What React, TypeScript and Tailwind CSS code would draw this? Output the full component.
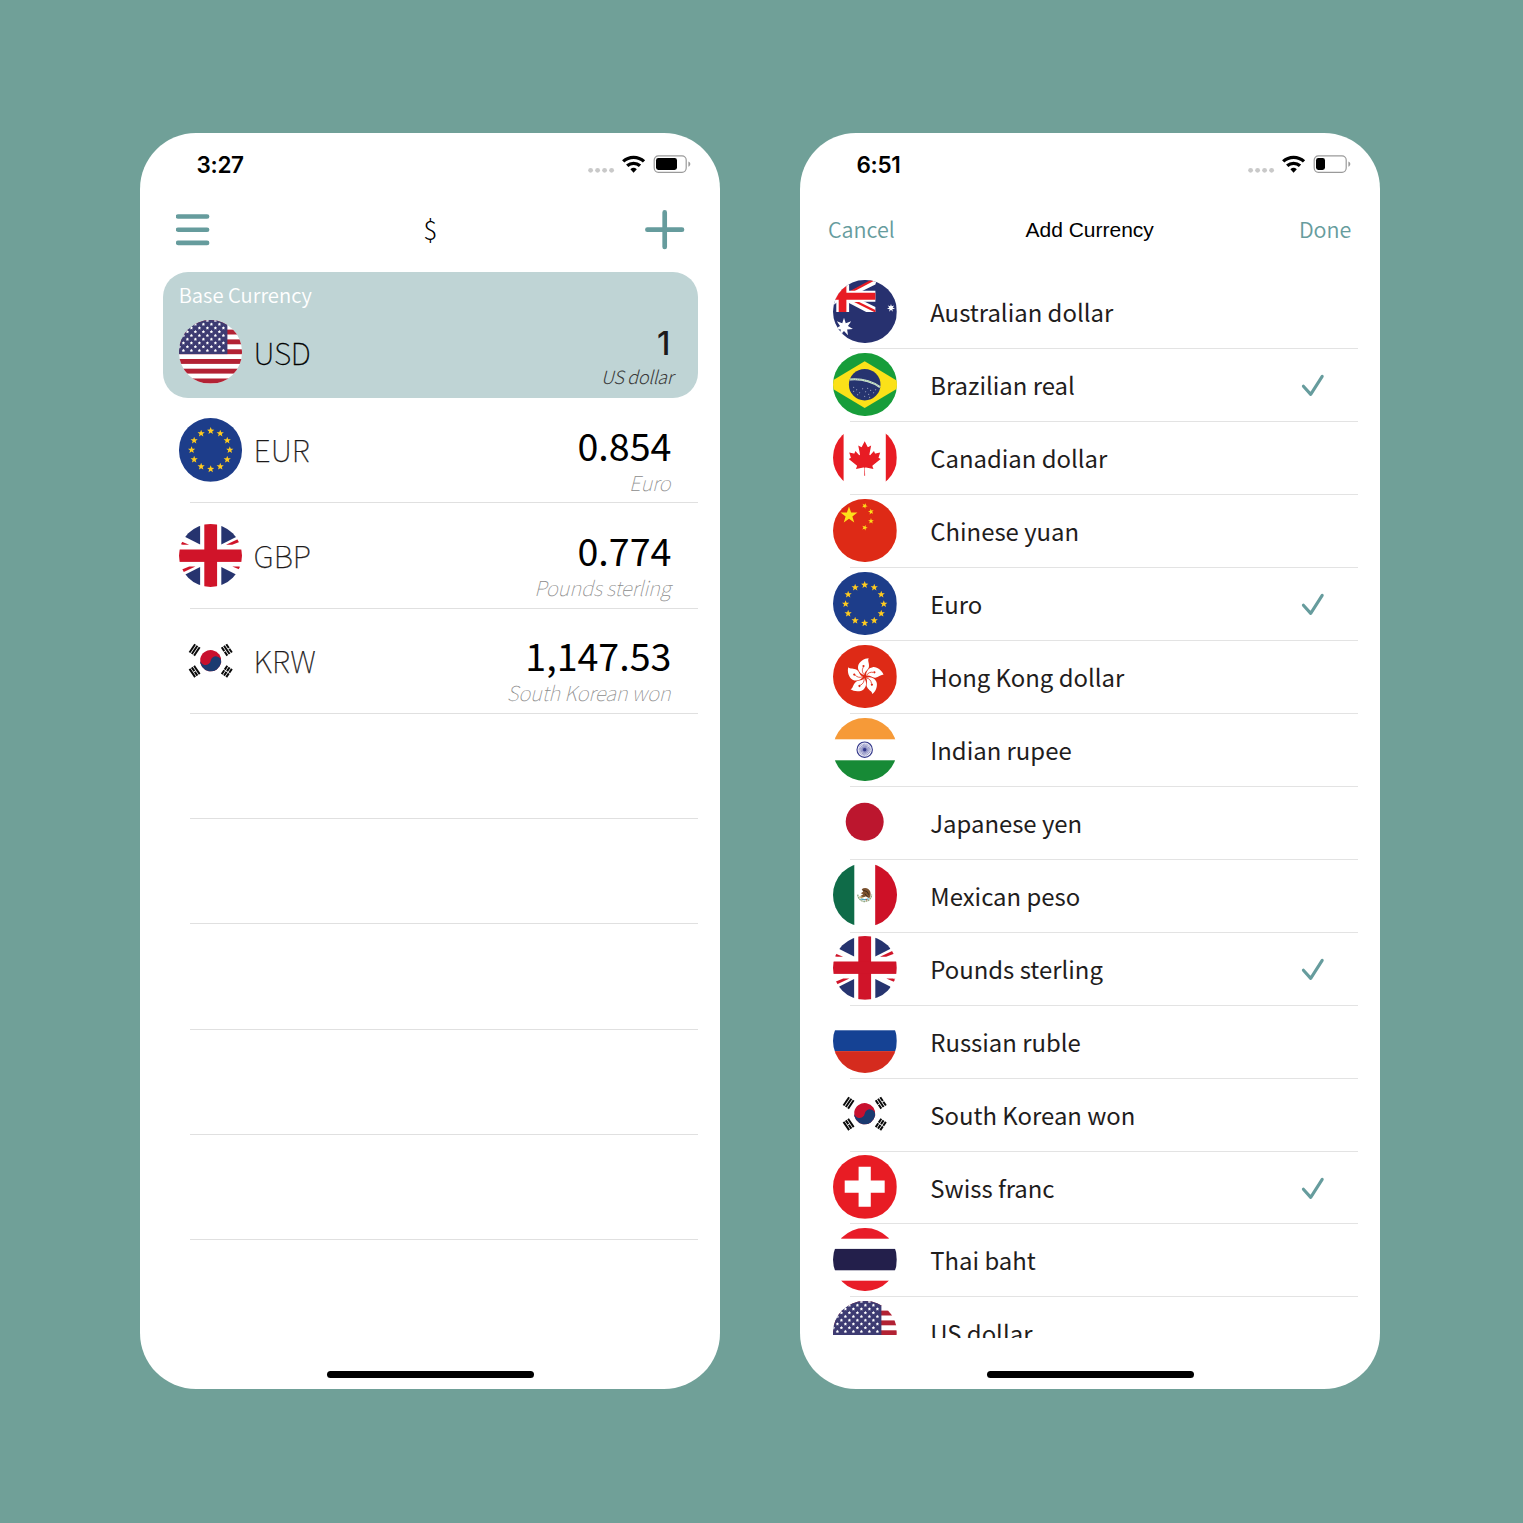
import type { ReactNode } from "react";

type FlagCode = "us" | "eu" | "gb" | "kr" | "au" | "br" | "ca" | "cn" | "hk" | "in" | "jp" | "mx" | "ru" | "ch" | "th";

function starPoints(cx: number, cy: number, r: number, n = 5, inner = 0.4, rot = 0) {
  const pts: string[] = [];
  for (let i = 0; i < n * 2; i++) {
    const rad = i % 2 === 0 ? r : r * inner;
    const a = (Math.PI * i) / n - Math.PI / 2 + (rot * Math.PI) / 180;
    pts.push(`${(cx + rad * Math.cos(a)).toFixed(2)},${(cy + rad * Math.sin(a)).toFixed(2)}`);
  }
  return pts.join(" ");
}

/* Three bars of a trigram; a broken bar has a gap in its middle. */
function Trigram({ x, y, angle, broken }: { x: number; y: number; angle: number; broken: boolean[] }) {
  return (
    <g transform={`translate(${x} ${y}) rotate(${angle})`} stroke="#0a0a0a" strokeWidth="2">
      {broken.map((b, i) => (
        <path key={i} d={b ? "M-5 0H-.4M.4 0H5" : "M-5 0H5"} transform={`translate(0 ${(i - 1) * 2.75})`} />
      ))}
    </g>
  );
}

const usStars: [number, number][] = [];
for (let r = 0; r < 9; r++) {
  for (let c = -1; c < 6; c++) {
    usStars.push([-27.3 + c * 8 + (r % 2 ? 4 : 0), -1.2 - r * 3.75]);
  }
}

const flags: Record<FlagCode, ReactNode> = {
  us: (
    <>
      <rect x="-32" y="-32" width="64" height="64" fill="#fff" />
      {[-31.8, -22.1, -12.3, -2.4, 7.3, 17, 26.8].map((y) => (
        <rect key={y} x="-32" y={y} width="64" height="4.9" fill="#b22234" />
      ))}
      <rect x="-32" y="-32" width="48.7" height="34.4" fill="#3d3b72" />
      {usStars
        .filter(([x]) => x < 15.5)
        .map(([x, y], i) => (
          <polygon key={i} points={starPoints(x, y, 1.75, 5, 0.55)} fill="#fff" />
        ))}
    </>
  ),
  eu: (
    <>
      <rect x="-32" y="-32" width="64" height="64" fill="#1d3d8a" />
      {Array.from({ length: 12 }, (_, i) => {
        const a = (i * Math.PI) / 6;
        return <polygon key={i} points={starPoints(19.1 * Math.sin(a), -19.1 * Math.cos(a) + 0.3, 3.8, 5, 0.42)} fill="#ffcb1f" />;
      })}
    </>
  ),
  gb: (
    <>
      <rect x="-32" y="-32" width="64" height="64" fill="#fff" />
      <g fill="#26346f">
        <path d="M-10.6-32V-11.2L-25.4-18.8L-32-32Z" />
        <path d="M10.6-32V-11.2L25.4-18.8L32-32Z" />
        <path d="M-10.6 32V11.2L-25.4 18.8L-32 32Z" />
        <path d="M10.6 32V11.2L25.4 18.8L32 32Z" />
      </g>
      <g fill="#d01429">
        <path d="M-32-15.2L-21.6-10.9H-32Z" />
        <path d="M15.3-10.9L28-16.9L30-14.3L21.5-10.9Z" />
        <path d="M32 15.2L21.6 10.9H32Z" />
        <path d="M-15.3 10.9L-28 16.9L-30 14.3L-21.5 10.9Z" />
        <rect x="-6.4" y="-32" width="12.8" height="64" />
        <rect x="-32" y="-6.2" width="64" height="12.4" />
      </g>
      <path d="M-32-12.5L-28-10.9H-32ZM32 12.5L28 10.9H32Z" fill="#fff" />
    </>
  ),
  kr: (
    <>
      <rect x="-32" y="-32" width="64" height="64" fill="#fff" />
      <g transform="rotate(10)">
        <circle r="10.6" fill="#c8102e" />
        <path d="M-10.6 0A5.3 5.3 0 0 0 0 0A5.3 5.3 0 0 1 10.6 0A10.6 10.6 0 0 1-10.6 0Z" fill="#1b3a70" />
      </g>
      <Trigram x={-16.1} y={-10.8} angle={-56} broken={[false, false, false]} />
      <Trigram x={16.1} y={-10.8} angle={56} broken={[true, false, true]} />
      <Trigram x={-16.1} y={10.8} angle={56} broken={[false, true, false]} />
      <Trigram x={16.1} y={10.8} angle={-56} broken={[true, true, true]} />
    </>
  ),
  au: (
    <>
      <rect x="-32" y="-32" width="64" height="64" fill="#27316f" />
      <path d="M-15.7-19.5L8.5-32H12L10.7-27.2L-4-20H-15.7Z" fill="#fff" />
      <path d="M-16-11.5H-3L10.7-4.6V.3H1.5L-15.7-8.6Z" fill="#fff" />
      <path d="M-14.6-20.8L5-31.2H10L-10-20.8Z" fill="#e81c24" />
      <path d="M-10.6-9.8H-5.6L10.7-1.7V.3H9.5Z" fill="#e81c24" />
      <rect x="-28.4" y="-32" width="12.8" height="32.3" fill="#fff" />
      <path d="M-32-21H10.7V-10H-27L-32-6Z" fill="#fff" />
      <path d="M-32-14L-18.3-27V-19H10.7V-12H-18.3V.3H-26V-12H-32Z" fill="#e81c24" />
      <polygon points={starPoints(-20.7, 15.3, 9.2, 7, 0.44)} fill="#fff" />
      <polygon points={starPoints(26.3, -3.7, 4.1, 7, 0.44)} fill="#fff" />
      <polygon points={starPoints(-24, 21, 2.5, 7, 0.44)} fill="#fff" />
    </>
  ),
  br: (
    <>
      <rect x="-32" y="-32" width="64" height="64" fill="#179d3a" />
      <path d="M0-23.4L39 0L0 23.4L-39 0Z" fill="#fbe119" />
      <circle r="15.8" fill="#26346f" />
      <path d="M-15-5.2Q2-6.8 15.3 2.4" fill="none" stroke="#dcead8" strokeWidth="2" />
      <path d="M-15-5.2Q2-6.8 15.3 2.4" fill="none" stroke="#5aa572" strokeWidth=".7" strokeDasharray="1 .8" />
      <g fill="#c9cee0">
        {[[-11, 2.5], [-8, 5], [-5, 8], [-2, 4], [1, 7], [4, 9.5], [6, 5.5], [9, 8], [0, 11.5], [-7, 10], [3, 3.5], [11, 5], [5, 12.5], [-11, 6.5]].map(([x, y]) => (
          <circle key={`${x},${y}`} cx={x} cy={y} r=".5" />
        ))}
      </g>
    </>
  ),
  ca: (
    <>
      <rect x="-32" y="-32" width="64" height="64" fill="#fff" />
      <rect x="-32" y="-32" width="10.9" height="64" fill="#e81c24" />
      <rect x="21.1" y="-32" width="10.9" height="64" fill="#e81c24" />
      <path
        transform="translate(0 .7) scale(.0086)"
        fill="#e81c24"
        d="m-50 2030 25-863a95 95 0 0 0-131-98l-859 151 116-320a65 65 0 0 0-20-73l-941-762 212-99a65 65 0 0 0 34-79l-186-572 542 115a65 65 0 0 0 73-38l105-247 423 454a65 65 0 0 0 111-57l-204-1052 327 189a65 65 0 0 0 91-27l332-652 332 652a65 65 0 0 0 91 27l327-189-204 1052a65 65 0 0 0 111 57l423-454 105 247a65 65 0 0 0 73 38l542-115-186 572a65 65 0 0 0 34 79l212 99-941 762a65 65 0 0 0-20 73l116 320-859-151a95 95 0 0 0-131 98l25 863z"
      />
    </>
  ),
  cn: (
    <>
      <rect x="-32" y="-32" width="64" height="64" fill="#de2a16" />
      <g fill="#fde01a">
        <polygon points={starPoints(-15.7, -15.4, 8.9)} />
        <polygon points={starPoints(0, -24.8, 3, 5, 0.4, 25)} />
        <polygon points={starPoints(6.3, -19, 3, 5, 0.4, -10)} />
        <polygon points={starPoints(6.3, -9.6, 3)} />
        <polygon points={starPoints(0, -3, 3, 5, 0.4, 20)} />
      </g>
    </>
  ),
  hk: (
    <>
      <rect x="-32" y="-32" width="64" height="64" fill="#de2a16" />
      {[0, 72, 144, 216, 288].map((a) => (
        <g key={a} transform={`rotate(${a})`}>
          <path d="M-.6-1.6C-4-2.6-7.4-6-6.6-10.6C-5.8-15 0-18.6 4-18.5C2.6-16 4.9-13.4 4.2-9.8C3.6-6.6 0-6-.6-1.6Z" fill="#fff" />
          <path d="M-.6-2C-2.6-4-3-7-1.4-9.6" fill="none" stroke="#de2a16" strokeWidth=".7" />
          <circle cx="-1.2" cy="-10.6" r="1.1" fill="#de2a16" />
        </g>
      ))}
    </>
  ),
  in: (
    <>
      <rect x="-32" y="-32" width="64" height="64" fill="#fff" />
      <rect x="-32" y="-32" width="64" height="21.6" fill="#f69a38" />
      <rect x="-32" y="10.6" width="64" height="21.6" fill="#178a36" />
      <circle r="7.7" fill="#eeeef8" stroke="#33388a" strokeWidth="1.1" />
      {Array.from({ length: 12 }, (_, i) => (
        <path key={i} d="M0-6.2V6.2" transform={`rotate(${i * 15})`} stroke="#4a4f9c" strokeWidth=".45" />
      ))}
      <circle r="1.6" fill="#33388a" />
    </>
  ),
  jp: (
    <>
      <rect x="-32" y="-32" width="64" height="64" fill="#fff" />
      <circle r="19" fill="#bc162e" />
    </>
  ),
  mx: (
    <>
      <rect x="-32" y="-32" width="64" height="64" fill="#fff" />
      <rect x="-32" y="-32" width="21.6" height="64" fill="#0f6b48" />
      <rect x="10.5" y="-32" width="22" height="64" fill="#ce1127" />
      <path d="M-7 0C-6.5 4-3.5 6.8 0 6.8S6.5 4 7 0" fill="none" stroke="#93a984" strokeWidth="1.3" strokeDasharray="1.8 .5" />
      <path d="M-3-5.5C0-8 4.5-6.5 5.6-3C6.5 0 5.4 2.5 4.5 3.6L1.5 1.5L-1 2.6L-4.6 1.5L-1.5-.5L-4-1.5L-1.5-3Z" fill="#7b5230" />
      <path d="M-1.5-4.5L2.5-3L4 0M0-1L3 2.6" fill="none" stroke="#3f2a1c" strokeWidth="1" />
      <path d="M-5.5 2.2L-1.5 3.2" stroke="#c9a14e" strokeWidth="1" />
      <path d="M-4 4.2Q0 5.6 4 4" fill="none" stroke="#4aa6c4" strokeWidth="1.2" />
      <circle cx="1.8" cy="5" r=".8" fill="#d0552b" />
    </>
  ),
  ru: (
    <>
      <rect x="-32" y="-32" width="64" height="64" fill="#fff" />
      <rect x="-32" y="-10.4" width="64" height="20.8" fill="#154294" />
      <rect x="-32" y="10.4" width="64" height="22" fill="#d52b1e" />
    </>
  ),
  ch: (
    <>
      <rect x="-32" y="-32" width="64" height="64" fill="#e81c24" />
      <path d="M-6.1-20H6.1V-6.1H20V6.1H6.1V20H-6.1V6.1H-20V-6.1H-6.1Z" fill="#fff" />
    </>
  ),
  th: (
    <>
      <rect x="-32" y="-32" width="64" height="64" fill="#fff" />
      <rect x="-32" y="-32" width="64" height="11" fill="#e81c28" />
      <rect x="-32" y="-10.8" width="64" height="21.4" fill="#231f4b" />
      <rect x="-32" y="21" width="64" height="11" fill="#e81c28" />
    </>
  ),
};

function Flag({ code }: { code: FlagCode }) {
  return (
    <svg viewBox="-31.7 -31.7 63.4 63.4" className="block h-[63.4px] w-[63.4px] shrink-0 overflow-hidden rounded-full">
      {flags[code]}
    </svg>
  );
}

function StatusBar({ time, charge }: { time: string; charge: number }) {
  return (
    <div className="flex h-[62px] items-center justify-between pr-[29px] pl-[56.5px]">
      <span className="pt-[2px] font-['Inter'] text-[22.5px] leading-none font-semibold tracking-[-0.3px] text-black">{time}</span>
      <svg width="103" height="20" viewBox="0 0 103 20" fill="none">
        {[2.6, 9.6, 16.6, 23.6].map((x) => (
          <circle key={x} cx={x} cy="16.3" r="2.4" fill="#c9c9c9" />
        ))}
        <g stroke="#000" strokeWidth="3.3">
          <path d="M35.2 7.4A15.2 15.2 0 0 1 56 7.4" />
          <path d="M39.2 11.8A9.4 9.4 0 0 1 52 11.8" />
        </g>
        <path d="M45.6 18.8L42.4 15.2A4.8 4.8 0 0 1 48.8 15.2Z" fill="#000" />
        <rect x="66.2" y="1.9" width="32" height="16.4" rx="4.2" stroke="#9a9a9a" strokeWidth="1.2" />
        <rect x="68" y="4" width={charge} height="12" rx="2.4" fill="#000" />
        <path d="M100.4 7.4C101.7 7.9 102.3 8.9 102.3 10.1S101.7 12.3 100.4 12.8Z" fill="#9a9a9a" />
      </svg>
    </div>
  );
}

function Phone({ children }: { children: ReactNode }) {
  return (
    <section className="flex h-[1256.4px] w-[580.4px] shrink-0 flex-col overflow-hidden rounded-[56px] bg-white">
      {children}
    </section>
  );
}

function HomeIndicator() {
  return (
    <div className="flex grow items-end justify-center pb-[11px]">
      <div className="h-[7px] w-[207px] rounded-full bg-black" />
    </div>
  );
}

const rates: { code: FlagCode; label: string; value: string; name: string }[] = [
  { code: "eu", label: "EUR", value: "0.854", name: "Euro" },
  { code: "gb", label: "GBP", value: "0.774", name: "Pounds sterling" },
  { code: "kr", label: "KRW", value: "1,147.53", name: "South Korean won" },
];

const currencies: { code: FlagCode; name: string; selected?: boolean }[] = [
  { code: "au", name: "Australian dollar" },
  { code: "br", name: "Brazilian real", selected: true },
  { code: "ca", name: "Canadian dollar" },
  { code: "cn", name: "Chinese yuan" },
  { code: "eu", name: "Euro", selected: true },
  { code: "hk", name: "Hong Kong dollar" },
  { code: "in", name: "Indian rupee" },
  { code: "jp", name: "Japanese yen" },
  { code: "mx", name: "Mexican peso" },
  { code: "gb", name: "Pounds sterling", selected: true },
  { code: "ru", name: "Russian ruble" },
  { code: "kr", name: "South Korean won" },
  { code: "ch", name: "Swiss franc", selected: true },
  { code: "th", name: "Thai baht" },
  { code: "us", name: "US dollar" },
];

function RatesScreen() {
  return (
    <Phone>
      <StatusBar time="3:27" charge={21} />
      <nav className="grid h-[69px] grid-cols-3 items-center pr-[35.5px] pl-[35.5px]">
        <svg width="34" height="32" viewBox="0 0 34 32" stroke="#669c9d" strokeWidth="4.6" strokeLinecap="round">
          <path d="M2.1 2.5H31.1M2.1 15.7H31.1M2.1 28.9H31.1" />
        </svg>
        <span className="pb-[2px] text-center text-[26px] leading-none font-light text-black">$</span>
        <svg className="justify-self-end" width="40" height="40" viewBox="0 0 40 40" stroke="#669c9d" strokeWidth="4.7" strokeLinecap="round">
          <path d="M2.4 19.7H37M19.7 2.4V37" />
        </svg>
      </nav>
      <div className="mt-2 mr-[22px] ml-[22.5px] flex h-[126px] shrink-0 flex-col rounded-[25px] bg-[#bfd4d5] pr-6 pl-[16.2px]">
        <div className="h-[46px] text-[20.2px] leading-[46px] font-[350] text-white">Base Currency</div>
        <div className="flex h-[68px] items-center">
          <Flag code="us" />
          <span className="mb-[1px] ml-[11.5px] text-[30.2px] leading-[40px] font-thin tracking-[-0.3px] text-black [-webkit-text-stroke:0.3px_#000]">USD</span>
          <div className="ml-auto flex flex-col items-end pt-[12px]">
            <span className="pr-[4px] font-['Inter'] text-[32.3px] leading-[36px] font-medium text-[#1d1a1a]">1</span>
            <span className="pr-[1.5px] text-[18.3px] leading-[28px] font-light tracking-[-0.4px] text-[#3a3a3a] italic">US dollar</span>
          </div>
        </div>
      </div>
      {rates.map((r) => (
        <div key={r.code} className="shrink-0">
          <div className="flex h-[104.28px] items-center pr-[49px] pl-[38.7px]">
            <Flag code={r.code} />
            <span className="mb-[1.5px] ml-[11.5px] text-[30.4px] leading-[40px] font-thin text-[#1d1a1a] [-webkit-text-stroke:0.25px_#1d1a1a]">{r.label}</span>
            <div className="ml-auto flex flex-col items-end pt-[19px]">
              <span className="text-[37.6px] leading-[44px] text-black">{r.value}</span>
              <span className="pr-[1px] text-[20.5px] leading-[30px] font-thin tracking-[-0.2px] text-[#8c8c8c] italic">{r.name}</span>
            </div>
          </div>
          <div className="mr-[22px] ml-[50px] h-px bg-[#e0e0e0]" />
        </div>
      ))}
      {[0, 1, 2, 3, 4].map((i) => (
        <div key={i} className="shrink-0 pt-[104.28px]">
          <div className="mr-[22px] ml-[50px] h-px bg-[#e0e0e0]" />
        </div>
      ))}
      <HomeIndicator />
    </Phone>
  );
}

function AddCurrencyScreen() {
  return (
    <Phone>
      <StatusBar time="6:51" charge={9} />
      <nav className="grid h-[69px] grid-cols-[1fr_auto_1fr] items-center pr-[29px] pl-[28px]">
        <span className="pb-[1.5px] text-[21.5px] leading-[30px] font-[350] text-[#669c9d]">Cancel</span>
        <span className="font-['Liberation_Sans'] text-[21px] leading-[30px] text-black">Add Currency</span>
        <span className="pb-[1.5px] text-right text-[21.5px] leading-[30px] font-[350] text-[#669c9d]">Done</span>
      </nav>
      <div className="h-[1074px] shrink-0 overflow-hidden pt-[12.3px]">
        {currencies.map((c, i) => (
          <div key={c.code}>
            <div className="flex h-[71.94px] items-center pr-[55px] pl-[33.4px]">
              {i === currencies.length - 1 ? (
                <div className="mb-[30.8px] h-[34px] shrink-0 overflow-hidden">
                  <Flag code={c.code} />
                </div>
              ) : (
                <div className="mb-[1.4px] shrink-0">
                  <Flag code={c.code} />
                </div>
              )}
              <span className="ml-[33.5px] text-[23.9px] leading-[36px] text-[#1f1d1d]">{c.name}</span>
              {c.selected && (
                <svg className="ml-auto" width="24" height="24" viewBox="0 0 24 24" fill="none" stroke="#669c9d" strokeWidth="3.1" strokeLinecap="round" strokeLinejoin="round">
                  <path d="M2.4 13.2L9.7 21.4L21.2 3.4" />
                </svg>
              )}
            </div>
            <div className="mr-[22px] ml-[50px] h-px bg-[#e3e3e3]" />
          </div>
        ))}
      </div>
      <HomeIndicator />
    </Phone>
  );
}

export default function App() {
  return (
    <main className="flex h-[1523px] w-[1523px] gap-[79.6px] overflow-hidden bg-[#70a098] pt-[133px] pl-[140px] font-['Noto_Sans_CJK_SC',sans-serif]">
      <RatesScreen />
      <AddCurrencyScreen />
    </main>
  );
}
